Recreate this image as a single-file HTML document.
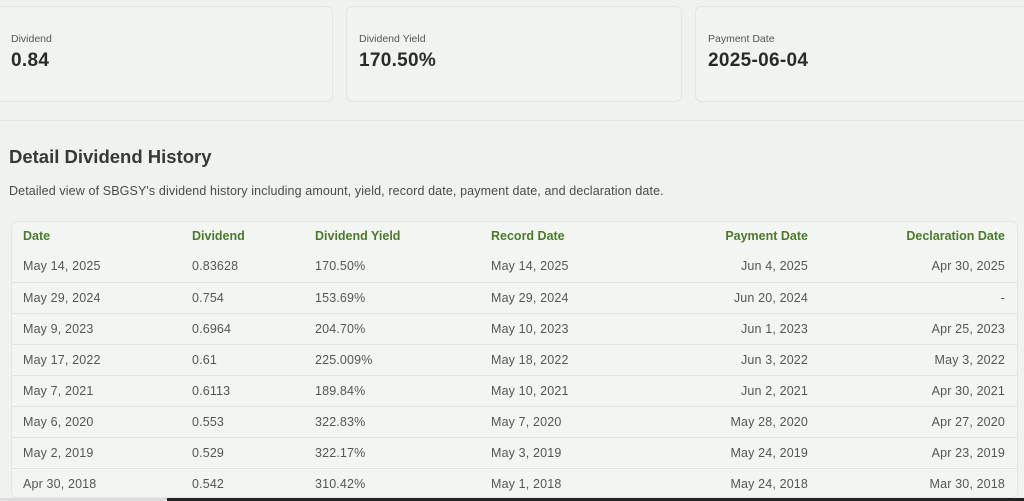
<!DOCTYPE html>
<html><head><meta charset="utf-8"><style>
*{margin:0;padding:0;box-sizing:border-box}
body{width:1024px;height:501px;overflow:hidden;background:#eff3ef;font-family:"Liberation Sans",sans-serif;position:relative;color:#333}
.card{position:absolute;top:6px;height:96px;border:1px solid #e2e7e2;border-radius:6px;background:#f0f4f0}
.lbl{position:absolute;left:10px;top:26px;font-size:10.5px;color:#555}
.val{position:absolute;left:10px;top:43px;font-size:19px;font-weight:bold;color:#2a2a2a;letter-spacing:0.3px}
.sec{position:absolute;top:120px;left:0;width:1024px;border-top:1px solid #e2e7e2}
h2{position:absolute;left:9px;top:146px;font-size:18.5px;font-weight:bold;color:#383838}
.desc{position:absolute;left:9px;top:184px;font-size:12.5px;color:#4a4a4a;letter-spacing:0.12px}
.tbl{position:absolute;left:11px;top:221px;width:1007px;height:277px;border:1px solid #e2e7e2;border-radius:6px;background:#f2f5f2;overflow:hidden}
.row{position:absolute;left:0;width:100%;height:31px;font-size:12.5px;color:#555;letter-spacing:0.15px}
.row.b{border-top:1px solid #e0e5e0}
.row span{position:absolute;top:8px}
.hd{color:#4a7a2a;font-weight:bold;letter-spacing:0}
.hd span{top:7px}
.c1{left:11px}.c2{left:180px}.c3{left:303px}.c4{left:479px}
.c5{right:209px}.c6{right:12px}
</style></head><body>
<div class="card" style="left:-10px;width:343px"><div class="lbl" style="left:20px">Dividend</div><div class="val" style="left:20px">0.84</div></div>
<div class="card" style="left:346px;width:336px"><div class="lbl" style="left:12px">Dividend Yield</div><div class="val" style="left:12px">170.50%</div></div>
<div class="card" style="left:695px;width:340px"><div class="lbl" style="left:12px">Payment Date</div><div class="val" style="left:12px">2025-06-04</div></div>
<div class="sec"></div>
<h2>Detail Dividend History</h2>
<div class="desc">Detailed view of SBGSY's dividend history including amount, yield, record date, payment date, and declaration date.</div>
<div class="tbl">
<div class="row hd" style="top:0"><span class="c1">Date</span><span class="c2">Dividend</span><span class="c3">Dividend Yield</span><span class="c4">Record Date</span><span class="c5">Payment Date</span><span class="c6">Declaration Date</span></div>
<div class="row" style="top:29px"><span class="c1">May 14, 2025</span><span class="c2">0.83628</span><span class="c3">170.50%</span><span class="c4">May 14, 2025</span><span class="c5">Jun 4, 2025</span><span class="c6">Apr 30, 2025</span></div>
<div class="row b" style="top:60px"><span class="c1">May 29, 2024</span><span class="c2">0.754</span><span class="c3">153.69%</span><span class="c4">May 29, 2024</span><span class="c5">Jun 20, 2024</span><span class="c6">-</span></div>
<div class="row b" style="top:91px"><span class="c1">May 9, 2023</span><span class="c2">0.6964</span><span class="c3">204.70%</span><span class="c4">May 10, 2023</span><span class="c5">Jun 1, 2023</span><span class="c6">Apr 25, 2023</span></div>
<div class="row b" style="top:122px"><span class="c1">May 17, 2022</span><span class="c2">0.61</span><span class="c3">225.009%</span><span class="c4">May 18, 2022</span><span class="c5">Jun 3, 2022</span><span class="c6">May 3, 2022</span></div>
<div class="row b" style="top:153px"><span class="c1">May 7, 2021</span><span class="c2">0.6113</span><span class="c3">189.84%</span><span class="c4">May 10, 2021</span><span class="c5">Jun 2, 2021</span><span class="c6">Apr 30, 2021</span></div>
<div class="row b" style="top:184px"><span class="c1">May 6, 2020</span><span class="c2">0.553</span><span class="c3">322.83%</span><span class="c4">May 7, 2020</span><span class="c5">May 28, 2020</span><span class="c6">Apr 27, 2020</span></div>
<div class="row b" style="top:215px"><span class="c1">May 2, 2019</span><span class="c2">0.529</span><span class="c3">322.17%</span><span class="c4">May 3, 2019</span><span class="c5">May 24, 2019</span><span class="c6">Apr 23, 2019</span></div>
<div class="row b" style="top:246px"><span class="c1">Apr 30, 2018</span><span class="c2">0.542</span><span class="c3">310.42%</span><span class="c4">May 1, 2018</span><span class="c5">May 24, 2018</span><span class="c6">Mar 30, 2018</span></div>
</div>
<div style="position:absolute;left:0;top:498px;width:167px;height:3px;background:#dcdcdc"></div>
<div style="position:absolute;left:167px;top:498px;width:857px;height:3px;background:#222"></div>
</body></html>
